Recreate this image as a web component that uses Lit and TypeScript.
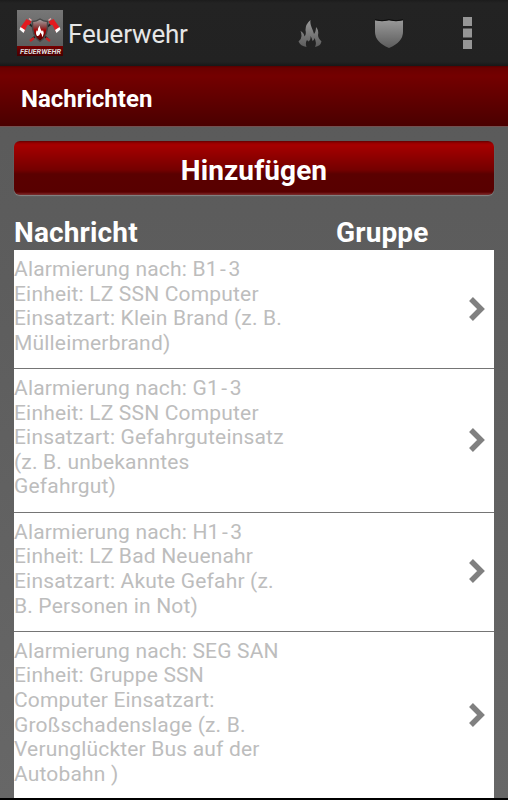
import { LitElement, html, css } from "lit";
import { customElement } from "lit/decorators.js";

const messages: string[][] = [
  ["Alarmierung nach: B1-3", "Einheit: LZ SSN Computer", "Einsatzart: Klein Brand (z. B.", "Mülleimerbrand)"],
  ["Alarmierung nach: G1-3", "Einheit: LZ SSN Computer", "Einsatzart: Gefahrguteinsatz", "(z. B. unbekanntes", "Gefahrgut)"],
  ["Alarmierung nach: H1-3", "Einheit: LZ Bad Neuenahr", "Einsatzart: Akute Gefahr (z.", "B. Personen in Not)"],
  ["Alarmierung nach: SEG SAN", "Einheit: Gruppe SSN", "Computer Einsatzart:", "Großschadenslage (z. B.", "Verunglückter Bus auf der", "Autobahn )"],
];

const renderLine = (line: string) => {
  const [before, after] = line.split("-");
  return after === undefined
    ? html`<div>${line}</div>`
    : html`<div>${before}<span class="dash">-</span>${after}</div>`;
};

@customElement("app-root")
export class AppRoot extends LitElement {
  static styles = css`
    :host {
      display: flex;
      flex-direction: column;
      box-sizing: border-box;
      width: 508px;
      height: 800px;
      overflow: hidden;
      border-bottom: 2px solid #000;
      font-family: Roboto, "Liberation Sans", sans-serif;
      color: #fff;
      background: linear-gradient(#595959, #5d5d5d 35%, #676767);
    }
    .bar {
      display: flex;
      align-items: center;
      flex: none;
      height: 66px;
      background: linear-gradient(#1c1c1c, #232323 3px, #222 62px, #181818);
    }
    .logo { width: 46px; height: 46px; margin-left: 17px; flex: none; overflow: visible; }
    .app {
      width: 225px;
      margin-left: 5px;
      font-size: 26px;
      line-height: 30px;
      letter-spacing: -0.2px;
      color: #e6e6e6;
      padding-top: 2px;
    }
    .action { flex: none; }
    .flame { margin-left: 5px; margin-top: 2px; }
    .shield { margin-left: 52px; }
    .dots { margin-left: 59px; }
    .heading {
      display: flex;
      align-items: center;
      box-sizing: border-box;
      flex: none;
      height: 61px;
      padding: 4px 21px 0;
      font-size: 24px;
      font-weight: 700;
      background: linear-gradient(#500 0, #6b0000 2px, #740000 10px, #4a0000 60px, #7c4a4a 60px, #6a5656 61px);
    }
    .content { padding: 14px 14px 0; }
    .add {
      display: flex;
      width: 480px;
      height: 54px;
      box-sizing: border-box;
      align-items: center;
      justify-content: center;
      border: 0;
      padding: 6px 0 0;
      border-radius: 6px;
      font: 700 28px/34px Roboto, sans-serif;
      letter-spacing: 0.1px;
      color: #fff;
      background: linear-gradient(#600 0, #960000 2px, #a60000 4px, #740000 29px, #5a0000 33px, #580000 51px, #7a2020 53px, #6d3030);
      box-shadow: 0 1px 1px #858585;
    }
    .columns {
      display: grid;
      grid-template-columns: 322px 1fr;
      height: 55px;
      padding-top: 21px;
      box-sizing: border-box;
      font-size: 28px;
      line-height: 33px;
      letter-spacing: 0.15px;
      font-weight: 700;
    }
    .list { background: #fff; }
    .row {
      display: flex;
      align-items: center;
      justify-content: space-between;
      box-sizing: border-box;
      padding: 7px 7px 12.6px 0;
      border-bottom: 1px solid #757575;
      color: #bdbdbd;
      font-size: 21px;
      line-height: 24.61px;
      letter-spacing: 0.18px;
      white-space: nowrap;
    }
    .dash { margin: 0 2.4px; }
    .chevron { flex: none; margin-top: 5px; }
  `;

  render() {
    return html`
      <header class="bar">
        <svg class="logo" viewBox="0 0 46 46">
          <defs>
            <linearGradient id="tile" x2="0" y2="1"><stop stop-color="#777" /><stop offset="1" stop-color="#555" /></linearGradient>
            <linearGradient id="crest" x2="0" y2="1"><stop stop-color="#aaa" /><stop offset=".35" stop-color="#844" /><stop offset=".5" stop-color="#a00" /><stop offset="1" stop-color="#400" /></linearGradient>
            <linearGradient id="band" x2="0" y2="1"><stop stop-color="#700" /><stop offset="1" stop-color="#400" /></linearGradient>
          </defs>
          <rect width="46" height="46" fill="url(#tile)" />
          <path d="M11 13 31 29M35 13 15 29" stroke="#222" stroke-width="2" />
          <path d="M29 28l4 3M17 28l-4 3" stroke="#c22" stroke-width="2.400" />
          <path d="M3 18 9.500 9l5 2.500-2 3.500-2 0-3.500 7z" fill="#e31b20" />
          <path d="M43 18 36.500 9l-5 2.500 2 3.500 2 0 3.500 7z" fill="#e31b20" />
          <path d="M3.500 17l4.500 3-1.500 3-4-3.500zM42.500 17l-4.500 3 1.500 3 4-3.500z" fill="#fff" />
          <path d="M12 8.500l2.500 2M34 8.500l-2.500 2" stroke="#eaa" stroke-width="1.500" />
          <path d="M15.500 11.500q4 0 7.500-2.500 3.500 2.500 7.500 2.500 1 15-7.500 20-8.500-5-7.500-20z" fill="url(#crest)" stroke="#484848" stroke-width="1.400" />
          <path d="M20 26q-2-3 0-6l1 1.500q-.5-3 1.500-6 .5 3 2.500 6l1-1.500q1.500 3 0 6l-1 1q.5-2-1.500-4.500-.5 2.500-2.500 3.500z" fill="#fff" />
          <rect y="36" width="46" height="10" fill="url(#band)" />
          <text x="3" y="43.500" textLength="41" lengthAdjust="spacingAndGlyphs" font-size="7" font-weight="700" font-style="italic" fill="#ddd">FEUERWEHR</text>
        </svg>
        <div class="app">Feuerwehr</div>
        <svg class="action flame" width="24" height="28" viewBox="0 0 24 28">
          <defs><linearGradient id="metal" x2="0" y2="1"><stop stop-color="#999" /><stop offset="1" stop-color="#5c5c5c" /></linearGradient></defs>
          <path fill="url(#metal)" d="M12.500 0C11.500 5 15 9 16 14q2-2 2-7 3 3 2 8 0 3 3.500 6.500-1 4.500-6.500 5.500 2-4-.5-9-.5 3-2 3-.5-3-2-5 .5 4-2 5.500l-1.500-1.500q-2 3-.5 7-6-1-8-5.500 3-2.500 3-5.500 0-3-1-5 3.500 1.500 4 5.500 2-2 1-6.500 0-6 5-10z" />
        </svg>
        <svg class="action shield" width="30" height="29" viewBox="0 0 30 29">
          <path fill="url(#metal)" d="M1 1q7 2 14 0 7 2 14 0v12q0 10-14 16Q1 23 1 13z" />
          <path d="M1 .8q7 2 14 0 7 2 14 0" fill="none" stroke="#090909" stroke-width="1" />
        </svg>
        <svg class="action dots" width="9" height="32" viewBox="0 0 9 32">
          <path fill="#969696" d="M0 0h9v9H0zM0 11.500h9v9H0zM0 23h9v9H0z" />
        </svg>
      </header>
      <div class="heading">Nachrichten</div>
      <main class="content">
        <button class="add">Hinzufügen</button>
        <div class="columns"><span>Nachricht</span><span>Gruppe</span></div>
        <div class="list">
          ${messages.map(
            (lines) => html`<div class="row">
              <div>${lines.map(renderLine)}</div>
              <svg class="chevron" width="20" height="26" viewBox="0 0 20 26">
                <path d="M4 3 14 13 4 23" fill="none" stroke="#808080" stroke-width="5.500" />
              </svg>
            </div>`
          )}
        </div>
      </main>
    `;
  }
}
